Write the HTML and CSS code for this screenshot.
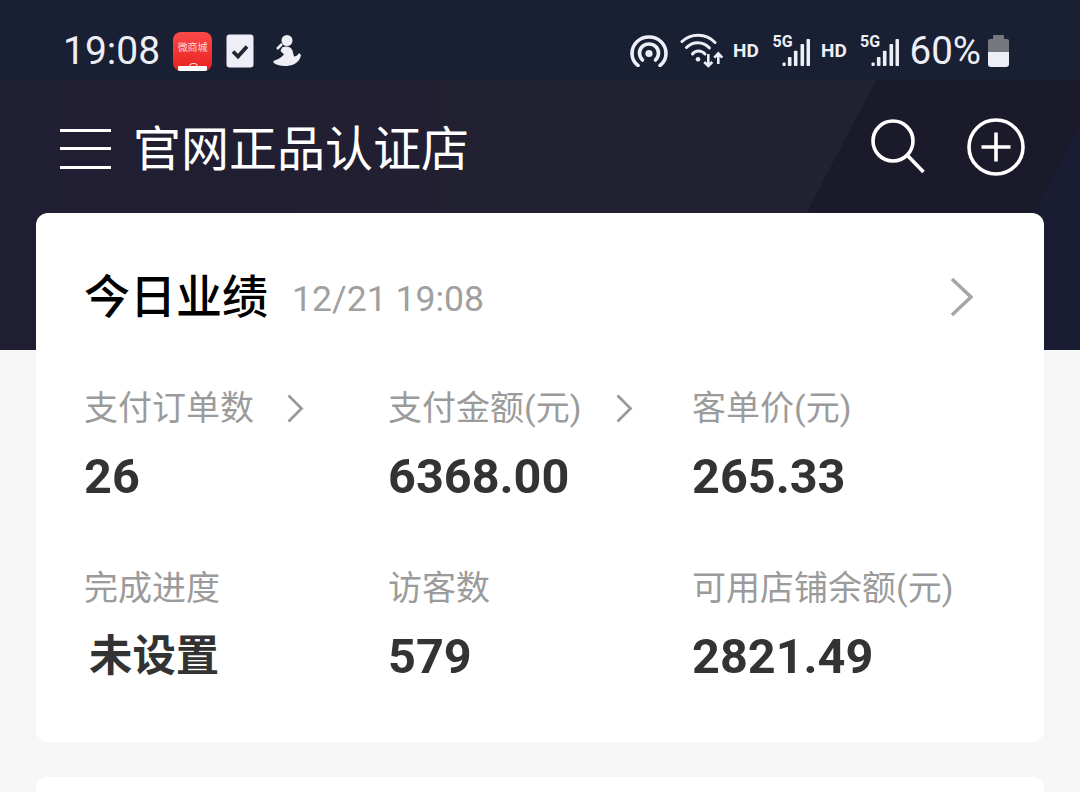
FILE: index.html
```html
<!DOCTYPE html>
<html lang="zh-CN">
<head>
<meta charset="utf-8">
<title>今日业绩</title>
<link rel="stylesheet" href="styles.css">
</head>
<body>
<div class="page">
  <div class="status">
    <div class="status-left">
      <span class="clock">19:08</span>
      <div class="app-red"><span class="app-red-text">微商城</span><span class="app-red-bag"></span></div>
      <svg class="ic-check" viewBox="0 0 28 34"><rect x="0.5" y="0.5" width="27" height="33" rx="3" fill="#eeeef6"/><path d="M7 17.500l5 5 9-10" fill="none" stroke="#23262f" stroke-width="3.800"/></svg>
      <svg class="ic-person" viewBox="0 0 30 36"><circle cx="15" cy="5.500" r="5.500" fill="#eeeef6"/><path d="M10 9L5 14" stroke="#eeeef6" stroke-width="2.500" fill="none"/><path d="M10 12.500C14 10.500 19 11.500 20.500 15.500L22 21.500C24 21.500 26 20 27 18L29 20C28.500 24 26 27 22.500 29C16 32 7 31.500 2.500 28.500C1 27.500 1 26 2.500 25.500C6 24.500 9.500 22.500 12 19.500L8.500 16L10 12.500Z" fill="#eeeef6"/></svg>
    </div>
    <div class="status-right">
      <svg class="ic-hotspot" viewBox="0 0 38 32"><path d="M8 30.500C4 27.500 2 23 2 18.500C2 9 9.500 2 19 2C28.500 2 36 9 36 18.500C36 23 34 27.500 30 30.500" fill="none" stroke="#eeeef6" stroke-width="3.600" stroke-linecap="round"/><path d="M12.500 25C10.500 23 9.500 20.500 9.500 18C9.500 13 13.500 9 19 9C24.500 9 28.500 13 28.500 18C28.500 20.500 27.500 23 25.500 25" fill="none" stroke="#eeeef6" stroke-width="3.600" stroke-linecap="round"/><circle cx="19" cy="18.500" r="3.600" fill="#eeeef6"/></svg>
      <svg class="ic-wifi" viewBox="0 0 44 36"><g fill="none" stroke="#eeeef6" stroke-width="3" stroke-linecap="round"><path d="M2 8.500C11 0 26 0 35 9.500"/><path d="M6.500 14.500C13 8 23 8 29.500 15"/><path d="M12.500 21C15.500 17 21.500 17 25 21"/></g><circle cx="18" cy="26.300" r="2.300" fill="#eeeef6"/><g fill="none" stroke="#eeeef6" stroke-width="2.600"><path d="M28.300 21V33M24.300 29l4 4 4-4"/><path d="M38.300 31V20.500M34.300 24.700l4-4.200 4 4.200"/></g></svg>
      <span class="hd">HD</span>
      <svg class="ic-signal" viewBox="0 -4 39 38"><text class="sig-text" x="1.500" y="13">5G</text><g fill="#eeeef6"><rect x="11.500" y="28.500" width="3.200" height="3.500" rx="1"/><rect x="16.900" y="23" width="3.600" height="9" rx="0.800"/><rect x="22.900" y="16.700" width="3.600" height="15.300" rx="0.800"/><rect x="29.500" y="10" width="3.600" height="22" rx="0.800"/><rect x="35.500" y="5" width="3.500" height="27" rx="0.800"/></g></svg>
      <span class="hd hd-second">HD</span>
      <svg class="ic-signal" viewBox="0 -4 39 38"><text class="sig-text" x="0" y="13">5G</text><g fill="#eeeef6"><rect x="11.500" y="28.500" width="3.200" height="3.500" rx="1"/><rect x="16.900" y="23" width="3.600" height="9" rx="0.800"/><rect x="22.900" y="16.700" width="3.600" height="15.300" rx="0.800"/><rect x="29.500" y="10" width="3.600" height="22" rx="0.800"/><rect x="35.500" y="5" width="3.500" height="27" rx="0.800"/></g></svg>
      <span class="percent">60%</span>
      <svg class="ic-battery" viewBox="0 0 21 32"><path d="M6 0h9a1 1 0 0 1 1 1v3h3a2 2 0 0 1 2 2v11H0V6a2 2 0 0 1 2-2h3V1a1 1 0 0 1 1-1z" fill="#77787f"/><path d="M0 17h21v12a3 3 0 0 1-3 3H3a3 3 0 0 1-3-3z" fill="#eeeef6"/></svg>
    </div>
  </div>

  <div class="hero">
    <div class="appbar">
      <div class="appbar-left">
        <div class="burger"><span></span><span></span><span></span></div>
        <h1 class="shop">官网正品认证店</h1>
      </div>
      <div class="appbar-right">
        <svg class="ic-search" viewBox="0 0 56 58"><circle cx="22" cy="22" r="20" fill="none" stroke="#fff" stroke-width="3.600"/><path d="M36 36l16.500 17" stroke="#fff" stroke-width="3.600" fill="none"/></svg>
        <svg class="ic-plus" viewBox="0 0 60 60"><circle cx="30" cy="30" r="27" fill="none" stroke="#fff" stroke-width="3.600"/><path d="M15.500 30h29M30 15.500v29" stroke="#fff" stroke-width="3.600" fill="none"/></svg>
      </div>
    </div>
  </div>

  <section class="card">
    <div class="card-head">
      <div class="card-title">
        <h2 class="title">今日业绩</h2>
        <span class="stamp">12/21 19:08</span>
      </div>
      <svg class="chev-lg" viewBox="0 0 23 40"><path d="M2 2l19 18L2 38" fill="none" stroke="#a6a6a6" stroke-width="3.600"/></svg>
    </div>
    <div class="grid">
      <div class="metric">
        <div class="label">支付订单数<svg class="chev" viewBox="0 0 17 29"><path d="M1.500 1.500l13 13-13 13" fill="none" stroke="#999" stroke-width="2.800"/></svg></div>
        <div class="value">26</div>
      </div>
      <div class="metric">
        <div class="label">支付金额(元)<svg class="chev chev-far" viewBox="0 0 17 29"><path d="M1.500 1.500l13 13-13 13" fill="none" stroke="#999" stroke-width="2.800"/></svg></div>
        <div class="value">6368.00</div>
      </div>
      <div class="metric">
        <div class="label">客单价(元)</div>
        <div class="value">265.33</div>
      </div>
      <div class="metric">
        <div class="label">完成进度</div>
        <div class="value value-cjk">未设置</div>
      </div>
      <div class="metric">
        <div class="label">访客数</div>
        <div class="value">579</div>
      </div>
      <div class="metric">
        <div class="label">可用店铺余额(元)</div>
        <div class="value">2821.49</div>
      </div>
    </div>
  </section>

  <section class="card card-next"></section>
</div>
</body>
</html>
```
FILE: styles.css
```css
* { box-sizing: border-box; }
html, body { margin: 0; padding: 0; height: 792px; overflow: hidden; }
body { background: #f7f7f7; font-family: Roboto, "Noto Sans CJK SC", sans-serif; }
h1, h2 { margin: 0; font: inherit; }
svg { display: block; flex: none; }

.page { height: 792px; overflow: hidden; }

.status {
  height: 80px;
  padding: 0 71px 0 63px;
  background: #1a2033;
  display: flex;
  justify-content: space-between;
  align-items: center;
  color: #eeeef6;
}
.status-left { display: flex; align-items: center; margin-top: 22px; }
.status-right { display: flex; align-items: center; margin-top: 22px; }
.clock { font-size: 39px; line-height: 44px; margin-right: 13px; }

.app-red {
  width: 39px; height: 39px; border-radius: 8px;
  background: linear-gradient(#fb4a48, #e8211f);
  display: flex; flex-direction: column; align-items: center; justify-content: space-between;
  overflow: hidden; margin-right: 14px;
}
.app-red-text { font-size: 10px; line-height: 14px; color: #ffd8d6; margin-top: 9px; white-space: nowrap; }
.app-red-bag { width: 29px; height: 5px; background: #fff; border-radius: 1px 1px 0 0; position: relative; }
.app-red-bag::before {
  content: "";
  position: absolute; left: 11px; top: -3px;
  width: 7px; height: 4px;
  border: 1px solid #ffd8d6; border-bottom: 0;
  border-radius: 4px 4px 0 0;
}

.ic-check { width: 28px; height: 34px; margin-right: 18px; }
.ic-person { width: 30px; height: 36px; margin-top: 4px; }
.ic-hotspot { width: 38px; height: 32px; margin-right: 12px; }
.ic-wifi { width: 44px; height: 36px; margin-right: 9.500px; }
.hd { font-size: 19px; font-weight: 700; line-height: 24px; width: 28px; margin-right: 10px; white-space: nowrap; color: #eeeef6; }
.hd-second { margin-right: 11px; }
.ic-signal { width: 39px; height: 38px; margin-top: -4px; }
.sig-text { font-family: Roboto, sans-serif; font-size: 16px; font-weight: 700; fill: #eeeef6; }
.percent { font-size: 38.500px; line-height: 44px; margin: 0 7px 0 10.500px; }
.ic-battery { width: 21px; height: 32px; }
.ic-signal + .hd { margin-left: 11px; }

.hero {
  height: 270px;
  background: linear-gradient(90deg, #201e32 0, #221f33 437px, #222132 438px, #232233 100%);
  position: relative;
  overflow: hidden;
}
.hero::before {
  content: "";
  position: absolute; inset: 0;
  background: #1a1a2b;
  clip-path: polygon(876px 0, 1080px 0, 1080px 270px, 735px 270px);
}
.hero::after {
  content: "";
  position: absolute; inset: 0;
  background: #1a1c33;
  clip-path: polygon(1080px 45px, 1080px 270px, 960px 270px);
}
.appbar {
  position: relative; z-index: 1;
  height: 140px;
  padding: 0 54.500px 0 60px;
  display: flex; justify-content: space-between; align-items: center;
}
.appbar-left { display: flex; align-items: center; }
.appbar-right { display: flex; align-items: center; }
.burger { width: 51px; height: 40px; margin-top: -3px; display: flex; flex-direction: column; justify-content: space-between; margin-right: 22px; }
.burger span { display: block; height: 3px; background: #fff; }
.shop { font-size: 48px; line-height: 60px; color: #fff; font-weight: 400; white-space: nowrap; }
.ic-search { width: 56px; height: 58px; margin-right: 39px; margin-top: -5px; }
.ic-plus { width: 60px; height: 60px; margin-top: -6px; }

.card {
  background: #fff;
  border-radius: 12px;
  margin: 0 36px;
  position: relative;
  z-index: 2;
}
.hero + .card { margin-top: -137px; padding: 54px 48px 55px; height: 529px; }
.card-next { margin-top: 35px; height: 200px; }

.card-head { display: flex; justify-content: space-between; align-items: center; height: 60px; padding-right: 23px; }
.card-title { display: flex; align-items: center; }
.title { font-size: 46px; line-height: 60px; font-weight: 500; color: #000; margin-right: 24px; }
.stamp { font-size: 35.600px; line-height: 60px; color: #a0a0a0; margin-top: 3px; }
.chev-lg { width: 23px; height: 40px; }

.grid { display: grid; grid-template-columns: repeat(3, 304px); row-gap: 59px; margin-top: 59px; }
.metric { display: flex; flex-direction: column; row-gap: 17px; }
.label { display: flex; align-items: center; column-gap: 33px; font-size: 34px; line-height: 44px; color: #9b9b9b; white-space: nowrap; }
.chev { width: 17px; height: 29px; }
.chev-far { margin-left: 2px; }
.value { font-size: 48.600px; line-height: 60px; font-weight: 700; color: #333; white-space: nowrap; }
.value-cjk { font-size: 43.400px; padding-left: 5px; }
```
